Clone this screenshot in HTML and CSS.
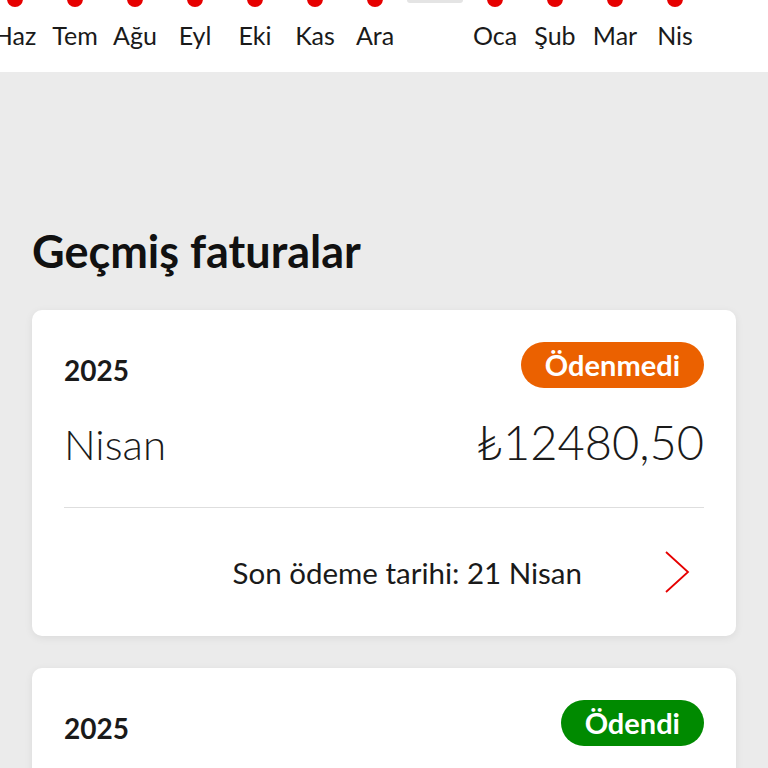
FILE: index.html
```html
<!DOCTYPE html>
<html lang="tr">
<head>
    <meta charset="UTF-8">
    <meta name="viewport" content="width=device-width, initial-scale=1.0">
    <title>Geçmiş faturalar</title>
    <link rel="stylesheet" href="styles.css">
</head>
<body>
    <div class="chart-strip">
        <div class="months">
            <div class="month"><span class="dot"></span><span class="label">Haz</span></div>
            <div class="month"><span class="dot"></span><span class="label">Tem</span></div>
            <div class="month"><span class="dot"></span><span class="label">Ağu</span></div>
            <div class="month"><span class="dot"></span><span class="label">Eyl</span></div>
            <div class="month"><span class="dot"></span><span class="label">Eki</span></div>
            <div class="month"><span class="dot"></span><span class="label">Kas</span></div>
            <div class="month"><span class="dot"></span><span class="label">Ara</span></div>
            <div class="month year-gap"><span class="year-mark"></span></div>
            <div class="month"><span class="dot"></span><span class="label">Oca</span></div>
            <div class="month"><span class="dot"></span><span class="label">Şub</span></div>
            <div class="month"><span class="dot"></span><span class="label">Mar</span></div>
            <div class="month"><span class="dot"></span><span class="label">Nis</span></div>
        </div>
    </div>

    <div class="content">
        <h2 class="section-title">Geçmiş faturalar</h2>

        <div class="bill-card">
            <div class="bill-top">
                <span class="bill-year">2025</span>
                <span class="badge unpaid">Ödenmedi</span>
            </div>
            <div class="bill-main">
                <span class="bill-month">Nisan</span>
                <span class="bill-amount">₺12480,50</span>
            </div>
            <div class="bill-footer">
                <span class="due-date">Son ödeme tarihi: 21 Nisan</span>
                <svg class="chevron" width="26" height="44" viewBox="0 0 26 44">
                    <path d="M2 2 L24 22 L2 42" fill="none" stroke="#e60000" stroke-width="1.8"/>
                </svg>
            </div>
        </div>

        <div class="bill-card">
            <div class="bill-top">
                <span class="bill-year">2025</span>
                <span class="badge paid">Ödendi</span>
            </div>
            <div class="bill-main">
                <span class="bill-month">Mart</span>
                <span class="bill-amount">₺11920,00</span>
            </div>
        </div>
    </div>
</body>
</html>
```

FILE: styles.css
```css
body {
    font-family: Lato, "Noto Sans", sans-serif;
    background-color: #ebebeb;
    color: #1a1a1a;
    margin: 0;
    overflow: hidden;
}
.chart-strip {
    background: #fff;
    height: 72px;
    overflow: hidden;
}
.months {
    display: flex;
    margin-left: -15px;
}
.month {
    width: 60px;
    flex: none;
    display: flex;
    flex-direction: column;
    align-items: center;
}
.dot {
    width: 16px;
    height: 16px;
    border-radius: 50%;
    background: #e60000;
    margin-top: -9px;
}
.label {
    font-size: 25px;
    margin-top: 13px;
    line-height: 30px;
}
.year-mark {
    width: 56px;
    height: 4px;
    margin-top: -1px;
    border-radius: 0 0 3px 3px;
    background: #e4e4e4;
}
.content {
    padding: 153px 32px 0;
}
.section-title {
    font-size: 45px;
    font-weight: 700;
    line-height: 53px;
    margin: 0 0 32px;
    color: #111;
}
.bill-card {
    background: #fff;
    border-radius: 10px;
    box-shadow: 0 2px 8px rgba(0, 0, 0, 0.07);
    padding: 32px 32px 0;
    margin-bottom: 32px;
}
.bill-top {
    display: flex;
    justify-content: space-between;
    align-items: center;
}
.bill-year {
    font-size: 28px;
    font-weight: 700;
    margin-top: 10px;
}
.badge {
    color: #fff;
    font-size: 29px;
    font-weight: 700;
    line-height: 46px;
    padding: 0 24px;
    border-radius: 23px;
}
.unpaid {
    background: #eb6100;
}
.paid {
    background: #008a00;
}
.bill-main {
    display: flex;
    justify-content: space-between;
    align-items: baseline;
    margin-top: 26px;
    padding-bottom: 37px;
    border-bottom: 1px solid #dedede;
    font-weight: 300;
}
.bill-month {
    font-size: 42px;
}
.bill-amount {
    font-size: 47px;
}
.bill-footer {
    height: 128px;
    display: flex;
    justify-content: flex-end;
    align-items: center;
}
.due-date {
    font-size: 29.5px;
    margin-right: 82px;
}
.chevron {
    margin-right: 14px;
}
```
